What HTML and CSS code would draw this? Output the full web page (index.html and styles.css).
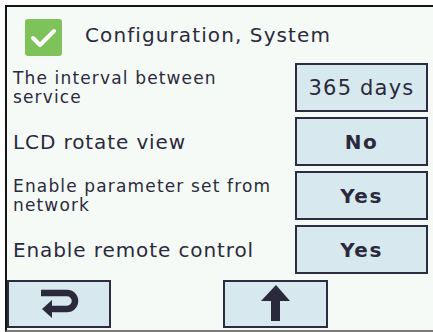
FILE: index.html
```html
<!DOCTYPE html>
<html lang="en">
<head>
  <meta charset="UTF-8">
  <meta name="viewport" content="width=device-width, initial-scale=1.0">
  <title>Configuration, System</title>
  <link rel="stylesheet" href="styles.css">
</head>
<body>
  <div class="frame">
    <div class="header">
      <div class="check">
        <svg width="37" height="37" viewBox="0 0 37 37">
          <rect x="0" y="0" width="37" height="37" rx="3" fill="#7dc35a"/>
          <polyline points="8,19 15,26 29,12" fill="none" stroke="#fff" stroke-width="4" stroke-linecap="round" stroke-linejoin="round"/>
        </svg>
      </div>
      <h1 class="title">Configuration, System</h1>
    </div>

    <div class="rows">
      <div class="row">
        <div class="label small">The interval between<br>service</div>
        <button class="value">365 days</button>
      </div>
      <div class="row">
        <div class="label">LCD rotate view</div>
        <button class="value bold">No</button>
      </div>
      <div class="row">
        <div class="label small">Enable parameter set from<br>network</div>
        <button class="value bold">Yes</button>
      </div>
      <div class="row">
        <div class="label">Enable remote control</div>
        <button class="value bold">Yes</button>
      </div>
    </div>

    <div class="footer">
      <button class="nav back">
        <svg width="50" height="30" viewBox="0 0 50 30">
          <path d="M7 4 H33 A8 8 0 0 1 33 20 H17" fill="none" stroke="#2b2a3c" stroke-width="6.5"/>
          <polygon points="8,20 18,11 18,29" fill="#2b2a3c"/>
        </svg>
      </button>
      <button class="nav up">
        <svg width="30" height="38" viewBox="0 0 30 38">
          <polygon points="15,0 29,16 0,16" fill="#2b2a3c"/>
          <rect x="10" y="14" width="9" height="22" fill="#2b2a3c"/>
        </svg>
      </button>
    </div>
  </div>
</body>
</html>
```

FILE: styles.css
```css
body{
  margin: 0;
  background-color: #fff;
  font-family: "DejaVu Sans", sans-serif;
  color: #2b2a3c;
}
.frame{
  width: 426px;
  height: 323px;
  margin: 5px 0 0 5px;
  border-top: 2px solid #141414;
  border-left: 2px solid #141414;
  border-bottom: 2px solid #7a7a7a;
  background-color: #f5faf7;
  display: flex;
  flex-direction: column;
}
.header{
  display: flex;
  align-items: center;
  height: 56px;
  padding-left: 18px;
}
.check{
  width: 37px;
  height: 37px;
  margin-top: 4px;
}
.check svg{
  display: block;
}
.title{
  margin: 0 0 0 23px;
  font-size: 20px;
  font-weight: normal;
  letter-spacing: 1.1px;
}
.rows{
  display: flex;
  flex-direction: column;
  gap: 5px;
  padding-right: 5px;
}
.row{
  display: grid;
  grid-template-columns: 1fr 133px;
  height: 49px;
}
.label{
  padding-left: 6px;
  display: flex;
  align-items: center;
  font-size: 20px;
  letter-spacing: 0.9px;
}
.label.small{
  font-size: 17px;
  line-height: 19px;
  letter-spacing: 1.15px;
  align-items: flex-start;
  padding-top: 6px;
}
.value{
  font-family: "DejaVu Sans", sans-serif;
  font-size: 21px;
  color: #2b2a3c;
  background-color: #d7e9ee;
  border: 2px solid #2e2c40;
  padding: 0;
  letter-spacing: 1.2px;
}
.value.bold{
  font-weight: bold;
  font-size: 20px;
  letter-spacing: 1.5px;
}
.footer{
  display: flex;
  gap: 112px;
  margin-top: 6px;
}
.nav{
  width: 104px;
  height: 48px;
  background-color: #d7e9ee;
  border: 2px solid #2e2c40;
  padding: 0;
  display: flex;
  align-items: center;
  justify-content: center;
}
.nav svg{
  display: block;
}
.nav.up{
  width: 105px;
}
```
